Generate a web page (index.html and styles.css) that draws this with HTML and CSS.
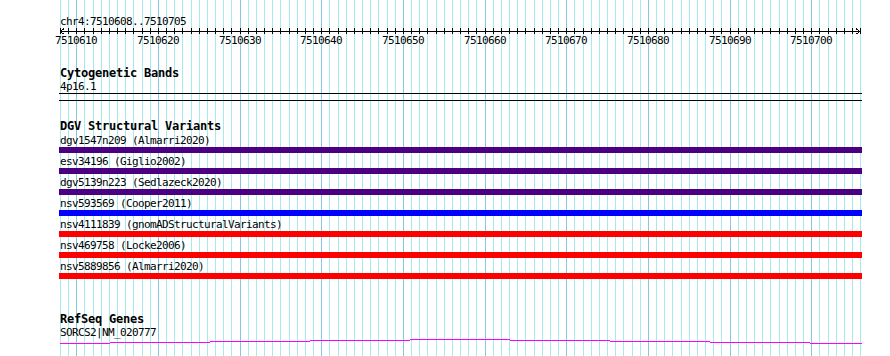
FILE: index.html
```html
<!DOCTYPE html>
<html lang="en">
<head>
    <meta charset="UTF-8">
    <title>chr4:7510608..7510705</title>
    <link rel="stylesheet" href="styles.css">
</head>
<body>
    <div class="browser">
        <div class="grid" id="grid"></div>

        <div class="tracks">
            <div class="seg-title">chr4:7510608..7510705</div>
            <svg class="ruler" id="ruler" width="803" height="6"></svg>
            <div class="ruler-labels" id="ruler-labels"></div>

            <div class="track cyto">
                <div class="track-title">Cytogenetic Bands</div>
                <div class="feat-label">4p16.1</div>
                <div class="band"></div>
            </div>

            <div class="track dgv">
                <div class="track-title">DGV Structural Variants</div>
                <div class="feature">
                    <div class="feat-label">dgv1547n209 (Almarri2020)</div>
                    <div class="bar indigo"></div>
                </div>
                <div class="feature">
                    <div class="feat-label">esv34196 (Giglio2002)</div>
                    <div class="bar indigo"></div>
                </div>
                <div class="feature">
                    <div class="feat-label">dgv5139n223 (Sedlazeck2020)</div>
                    <div class="bar indigo"></div>
                </div>
                <div class="feature">
                    <div class="feat-label">nsv593569 (Cooper2011)</div>
                    <div class="bar blue"></div>
                </div>
                <div class="feature">
                    <div class="feat-label">nsv4111839 (gnomADStructuralVariants)</div>
                    <div class="bar red"></div>
                </div>
                <div class="feature">
                    <div class="feat-label">nsv469758 (Locke2006)</div>
                    <div class="bar red"></div>
                </div>
                <div class="feature">
                    <div class="feat-label">nsv5889856 (Almarri2020)</div>
                    <div class="bar red"></div>
                </div>
            </div>

            <div class="track refseq">
                <div class="track-title">RefSeq Genes</div>
                <div class="feat-label">SORCS2|NM_020777</div>
                <svg class="gene" width="803" height="5">
                    <rect x="1" y="4" width="50" height="1"/>
                    <rect x="51" y="3" width="100" height="1"/>
                    <rect x="151" y="2" width="100" height="1"/>
                    <rect x="251" y="1" width="100" height="1"/>
                    <rect x="351" y="0" width="100" height="1"/>
                    <rect x="451" y="1" width="100" height="1"/>
                    <rect x="551" y="2" width="100" height="1"/>
                    <rect x="651" y="3" width="100" height="1"/>
                    <rect x="751" y="4" width="52" height="1"/>
                </svg>
            </div>
        </div>
    </div>

    <script>
        const START = 7510608;
        const BASES = 98;
        const STEP = 8.165;

        const grid = document.getElementById("grid");
        const ruler = document.getElementById("ruler");
        const labels = document.getElementById("ruler-labels");

        let ticks = '<rect x="1" y="3" width="801" height="1"/>';
        // arrow heads at both ends
        ticks += '<polyline points="5,0.5 1.5,3.5 5,6.5" fill="none" stroke="#000"/>';
        ticks += '<polyline points="797,0.5 800.5,3.5 797,6.5" fill="none" stroke="#000"/>';

        for (let i = 0; i <= BASES; i++) {
            const x = Math.round(i * STEP);
            const major = (START + i) % 10 === 0;

            const line = document.createElement("div");
            line.className = major ? "grid-line major" : "grid-line";
            line.style.left = x + "px";
            grid.appendChild(line);

            ticks += `<rect x="${x + 1}" y="0" width="1" height="6"/>`;

            if (major) {
                const label = document.createElement("span");
                label.className = "ruler-label";
                label.textContent = START + i;
                label.style.left = (x + 1) + "px";
                labels.appendChild(label);
            }
        }
        ruler.innerHTML = ticks;
    </script>
</body>
</html>
```

FILE: styles.css
```css
body {
    margin: 0;
    background: #fff;
    color: #000;
    font-family: "DejaVu Sans Mono", monospace;
}
.browser {
    position: relative;
    width: 890px;
    height: 356px;
    overflow: hidden;
}
.grid {
    position: absolute;
    left: 60px;
    top: 0;
    width: 801px;
    height: 356px;
}
.grid-line {
    position: absolute;
    top: 0;
    width: 1px;
    height: 100%;
    background: #a6eaef;
}
.grid-line.major {
    background: #88c6e6;
}
.tracks {
    position: relative;
    margin-left: 59px;
    width: 803px;
}
.seg-title, .feat-label, .ruler-label {
    font-size: 11px;
    line-height: 13px;
    height: 13px;
    letter-spacing: -0.62px;
    white-space: nowrap;
}
.seg-title, .feat-label {
    padding-left: 1px;
}
.seg-title {
    margin-top: 15px;
}
.ruler {
    display: block;
    fill: #000;
    shape-rendering: crispEdges;
}
.ruler-labels {
    position: relative;
    height: 13px;
}
.ruler-label {
    position: absolute;
    top: 0;
    transform: translateX(-50%);
}
.track-title {
    font-size: 12px;
    font-weight: bold;
    line-height: 13px;
    height: 13px;
    letter-spacing: -0.22px;
    padding-left: 1px;
    white-space: nowrap;
}
.cyto {
    margin-top: 20px;
}
.band {
    height: 6px;
    border-top: 1px solid #000;
    border-bottom: 1px solid #000;
}
.dgv {
    margin-top: 19px;
}
.dgv .track-title {
    margin-bottom: 1px;
}
.feature {
    margin-bottom: 2px;
}
.bar {
    height: 6px;
}
.bar.indigo {
    background: #4b0082;
}
.bar.blue {
    background: #0000ff;
}
.bar.red {
    background: #ff0000;
}
.refseq {
    margin-top: 34px;
}
.gene {
    display: block;
    fill: #ff00ff;
    shape-rendering: crispEdges;
}
```
